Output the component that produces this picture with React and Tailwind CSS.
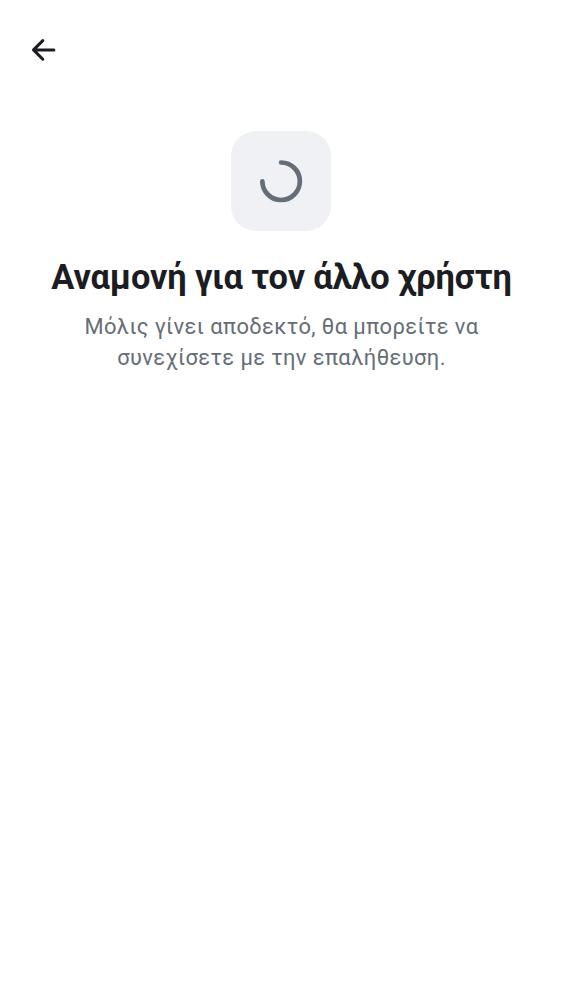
export default function App() {
  return (
    <main className="flex h-[1000px] w-[562px] flex-col bg-white font-['Roboto',sans-serif]">
      <header className="flex h-[100px] items-center pl-[25px]">
        <button aria-label="Πίσω" className="size-[38px]">
          <svg viewBox="0 0 38 38" className="size-[38px]" fill="none" stroke="#1b1d22" strokeWidth="3" strokeLinecap="round" strokeLinejoin="round">
            <path d="M28.9 18.9H8.5M17.8 9.6L8.5 18.9L17.8 28.2" />
          </svg>
        </button>
      </header>
      <section className="flex flex-col items-center pt-[31px] text-center">
        <div className="flex size-[100px] items-center justify-center rounded-[25px] bg-[#f0f1f5]">
          <svg viewBox="0 0 50 50" className="size-[50px]" fill="none" stroke="#656d77" strokeWidth="4.7" strokeLinecap="round">
            <path d="M25.1 6.5A18.75 18.75 0 1 1 6.35 25.25" />
          </svg>
        </div>
        <h1 className="mt-[24px] pl-px text-[34.4px] leading-[44px] font-bold tracking-[-0.12px] whitespace-nowrap text-[#1b1d22]">Αναμονή για τον άλλο χρήστη</h1>
        <p className="mt-[12px] pl-px text-[21.9px] leading-[31.25px] tracking-[0.4px] whitespace-nowrap text-[#656d77]">
          Μόλις γίνει αποδεκτό, θα μπορείτε να
          <br />
          συνεχίσετε με την επαλήθευση.
        </p>
      </section>
    </main>
  );
}
